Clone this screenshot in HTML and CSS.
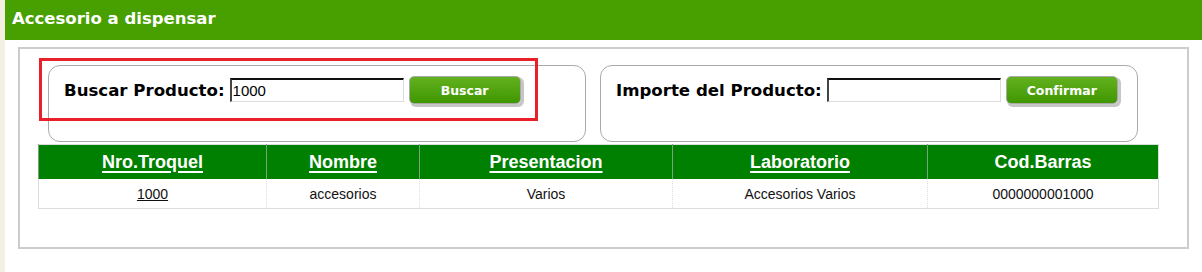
FILE: index.html
```html
<!DOCTYPE html>
<html lang="es">
<head>
    <meta charset="UTF-8">
    <title>Accesorio a dispensar</title>
    <link rel="stylesheet" href="styles.css">
</head>
<body>
    <div class="page">
        <div class="titlebar">Accesorio a dispensar</div>
        <div class="panel">
            <div class="forms">
                <div class="box">
                    <span class="label">Buscar Producto:</span>
                    <input type="text" class="field" value="1000">
                    <button class="btn">Buscar</button>
                    <div class="highlight"></div>
                </div>
                <div class="box">
                    <span class="label">Importe del Producto:</span>
                    <input type="text" class="field" value="">
                    <button class="btn">Confirmar</button>
                </div>
            </div>
            <table class="grid">
                <colgroup>
                    <col style="width: 228px">
                    <col style="width: 153px">
                    <col style="width: 253px">
                    <col style="width: 255px">
                    <col style="width: 231px">
                </colgroup>
                <tr>
                    <th><a href="#">Nro.Troquel</a></th>
                    <th><a href="#">Nombre</a></th>
                    <th><a href="#">Presentacion</a></th>
                    <th><a href="#">Laboratorio</a></th>
                    <th>Cod.Barras</th>
                </tr>
                <tr>
                    <td><a href="#">1000</a></td>
                    <td>accesorios</td>
                    <td>Varios</td>
                    <td>Accesorios Varios</td>
                    <td>0000000001000</td>
                </tr>
            </table>
        </div>
    </div>
</body>
</html>
```

FILE: styles.css
```css
body {
    margin: 0px;
    background-color: #f3f0e3;
    font-family: "DejaVu Sans", Verdana, sans-serif;
}

.page {
    margin-left: 5px;
    min-height: 100vh;
    background-color: white;
    overflow: hidden;
}

.titlebar {
    height: 40px;
    line-height: 38px;
    padding: 0px 7px;
    background-color: #48a000;
    color: white;
    font-size: 16.5px;
    font-weight: bold;
}

.panel {
    margin: 7px 13px 0px 13px;
    border: 2px solid #cccccc;
    padding: 16px 29px 38px 18px;
}

.forms {
    display: flex;
    gap: 14px;
    margin-left: 10px;
    margin-bottom: 2px;
}

.box {
    position: relative;
    display: flex;
    flex-wrap: wrap;
    align-items: center;
    align-content: flex-start;
    box-sizing: border-box;
    width: 538px;
    height: 77px;
    padding: 10px 15px 0px 15px;
    border: 1px solid #aaaaaa;
    border-radius: 12px;
}

.label {
    font-size: 16.6px;
    font-weight: bold;
    color: black;
    margin-right: 5px;
}

.field {
    box-sizing: border-box;
    width: 174px;
    height: 24px;
    margin: 0px 5px 0px 0px;
    padding: 0px 1px;
    border: 1px solid #dddddd;
    border-top: 2px solid #111111;
    border-left: 2px solid #444444;
    font-family: "Liberation Sans", Arial, sans-serif;
    font-size: 15px;
    color: black;
}

.btn {
    box-sizing: border-box;
    width: 112px;
    height: 28px;
    border: 1px solid #a9a9a9;
    border-radius: 5px;
    background: linear-gradient(#63b11f, #3f9700);
    box-shadow: 2px 2px 0px 1px #c6c6c6;
    color: white;
    font-family: "DejaVu Sans", Verdana, sans-serif;
    font-size: 12.5px;
    font-weight: bold;
    cursor: pointer;
}

.highlight {
    position: absolute;
    left: -10px;
    top: -8px;
    width: 499px;
    height: 63px;
    box-sizing: border-box;
    border: 3px solid #e8202a;
}

.grid {
    width: 1120px;
    border-collapse: collapse;
    border: 1px solid #dddddd;
    table-layout: fixed;
    font-family: "Liberation Sans", Arial, sans-serif;
}

.grid th {
    height: 34px;
    padding: 0px;
    background-color: #008000;
    color: white;
    font-size: 18px;
    font-weight: bold;
    border-left: 1px solid #7ba27b;
}

.grid th a {
    color: white;
    text-decoration: underline;
    text-decoration-thickness: 2px;
    text-underline-offset: 3px;
}

.grid td {
    height: 29px;
    padding: 0px;
    text-align: center;
    font-size: 14px;
    color: #111111;
    border-left: 1px dotted #dddddd;
}

.grid td a {
    color: #111111;
}
```
